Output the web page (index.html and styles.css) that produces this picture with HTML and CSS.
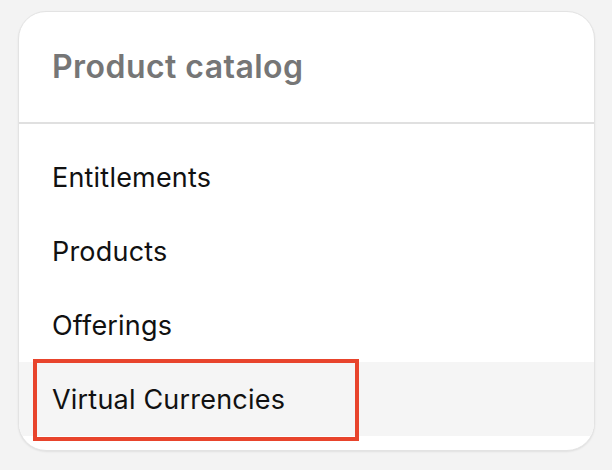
FILE: index.html
```html
<!DOCTYPE html>
<html lang="en">
<head>
<meta charset="utf-8">
<title>Product catalog</title>
<link rel="stylesheet" href="styles.css">
</head>
<body>
<div class="page">
  <section class="card">
    <header class="card-header">
      <h2 class="card-title">Product catalog</h2>
    </header>
    <ul class="menu">
      <li class="menu-item">Entitlements</li>
      <li class="menu-item">Products</li>
      <li class="menu-item">Offerings</li>
      <li class="menu-item menu-item--active">Virtual Currencies</li>
    </ul>
    <div class="highlight"></div>
  </section>
</div>
</body>
</html>
```

FILE: styles.css
```css
html, body {
  margin: 0;
  padding: 0;
  background: #f3f3f3;
}

body {
  font-family: Inter, "Noto Sans", sans-serif;
  width: 612px;
  height: 470px;
  overflow: hidden;
}

.page {
  padding: 11px 17px 0 18px;
}

.card {
  position: relative;
  background: #ffffff;
  border: 1px solid #e3e3e3;
  border-radius: 28px;
  box-shadow: 0 1px 2px rgba(0, 0, 0, 0.08);
  overflow: hidden;
  height: 440px;
  box-sizing: border-box;
}

.card-header {
  height: 110px;
  border-bottom: 2px solid #e0e0e0;
  display: flex;
  align-items: center;
  padding: 0 33px;
}

.card-title {
  margin: 0;
  font-size: 32px;
  font-weight: 600;
  color: #767676;
  letter-spacing: 0.45px;
  position: relative;
  top: -1px;
}

.menu {
  list-style: none;
  margin: 0;
  padding: 16px 0;
}

.menu-item {
  height: 74px;
  display: flex;
  align-items: center;
  padding: 0 33px;
  font-size: 27px;
  letter-spacing: 0.2px;
  color: #111111;
}

.menu-item--active {
  background: #f5f5f5;
}

.highlight {
  position: absolute;
  left: 14px;
  top: 347px;
  width: 318px;
  height: 74px;
  border: 4px solid #e8442c;
}
```
